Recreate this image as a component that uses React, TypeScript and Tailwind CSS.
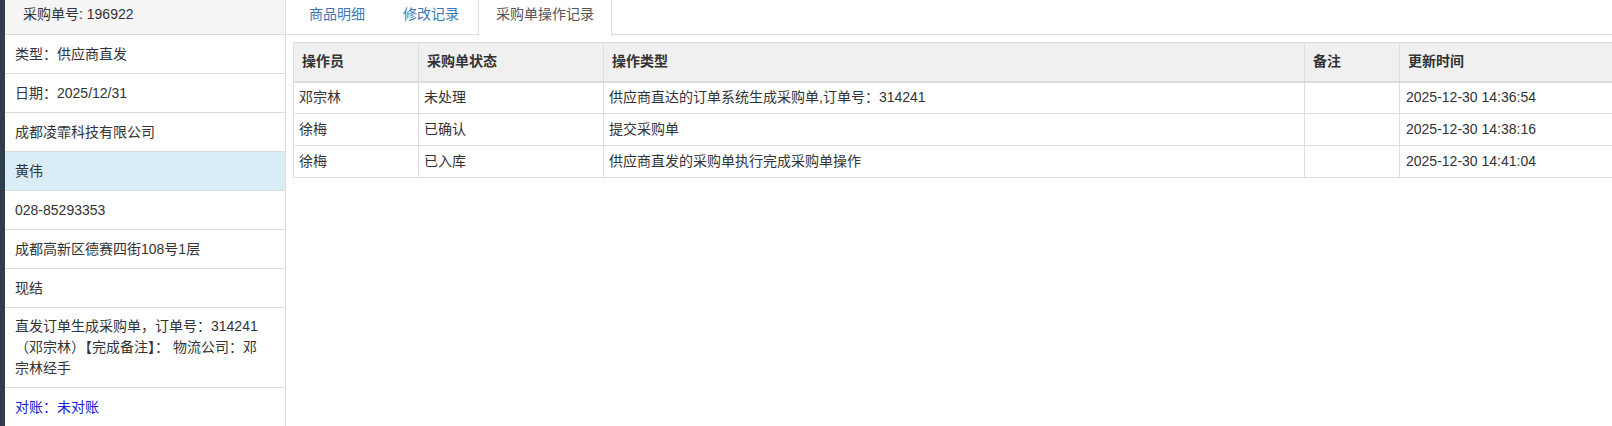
const FONT = "font-['Liberation_Sans','Noto_Sans_CJK_SC',sans-serif]";

const INFO_ROWS = [
  { text: "类型：供应商直发" },
  { text: "日期：2025/12/31" },
  { text: "成都凌霏科技有限公司" },
  { text: "黄伟", active: true },
  { text: "028-85293353" },
  { text: "成都高新区德赛四街108号1层" },
  { text: "现结" },
];

const TABS = [
  { label: "商品明细" },
  { label: "修改记录" },
  { label: "采购单操作记录", active: true },
];

const LOGS = [
  { user: "邓宗林", status: "未处理", action: "供应商直达的订单系统生成采购单,订单号：314241", note: "", time: "2025-12-30 14:36:54" },
  { user: "徐梅", status: "已确认", action: "提交采购单", note: "", time: "2025-12-30 14:38:16" },
  { user: "徐梅", status: "已入库", action: "供应商直发的采购单执行完成采购单操作", note: "", time: "2025-12-30 14:41:04" },
];

function InfoPanel() {
  return (
    <div className="w-[281px] shrink-0 border-r border-[#ddd] -mt-[6px] flex flex-col">
      <div className="h-[41px] shrink-0 bg-[#f5f5f5] border-b border-[#ddd] pl-[18px] flex items-center">
        采购单号: 196922
      </div>
      {INFO_ROWS.map((row, i) => (
        <div
          key={i}
          className={`h-[39px] shrink-0 border-b border-[#ddd] px-[10px] flex items-center ${row.active ? "bg-[#d9edf7]" : ""}`}
        >
          {row.text}
        </div>
      ))}
      {/* 备注 wraps over three lines */}
      <div className="shrink-0 border-b border-[#ddd] px-[10px] py-[8px] leading-[21px]">
        直发订单生成采购单，订单号：314241
        <br />
        （邓宗林）【完成备注】： 物流公司：邓
        <br />
        宗林经手
      </div>
      <div className="h-[38px] shrink-0 px-[10px] flex items-center text-[#1a1ad0]">对账：未对账</div>
    </div>
  );
}

function Tabs() {
  return (
    <div className="ml-[1px] h-[41px] border-b border-[#ddd] pl-[3px] flex">
      {TABS.map(tab => (
        <div
          key={tab.label}
          className={`flex items-center ${
            tab.active
              ? "h-[42px] px-[17px] pb-[1px] -mb-[1px] bg-white border border-[#ddd] border-b-transparent text-[#555]"
              : "h-[41px] px-[19px] text-[#3b78b4]"
          }`}
        >
          {tab.label}
        </div>
      ))}
    </div>
  );
}

function LogTable() {
  return (
    <table className="ml-[7px] mt-[7px] w-[1346px] table-fixed border-collapse">
      <colgroup>
        <col className="w-[125px]" />
        <col className="w-[185px]" />
        <col className="w-[701px]" />
        <col className="w-[95px]" />
        <col className="w-[240px]" />
      </colgroup>
      <thead>
        <tr className="bg-[#f0f0f0]">
          {["操作员", "采购单状态", "操作类型", "备注", "更新时间"].map(h => (
            <th key={h} className="h-[39px] border border-[#ddd] border-b-2 px-[8px] text-left font-bold">
              {h}
            </th>
          ))}
        </tr>
      </thead>
      <tbody>
        {LOGS.map((log, i) => (
          <tr key={i}>
            <td className="h-[32px] border border-[#ddd] px-[5px]">{log.user}</td>
            <td className="h-[32px] border border-[#ddd] px-[5px]">{log.status}</td>
            <td className="h-[32px] border border-[#ddd] px-[5px]">{log.action}</td>
            <td className="h-[32px] border border-[#ddd] px-[5px]">{log.note}</td>
            <td className="h-[32px] border border-[#ddd] px-[6px]">{log.time}</td>
          </tr>
        ))}
      </tbody>
    </table>
  );
}

export default function App() {
  return (
    <div className={`w-[1612px] h-[426px] overflow-hidden bg-white flex text-[14px] text-[#333] ${FONT}`}>
      <div className="w-[5px] shrink-0 bg-[#303d4a]" />
      <InfoPanel />
      <div className="flex-1 min-w-0 -mt-[6px] overflow-hidden">
        <Tabs />
        <LogTable />
      </div>
    </div>
  );
}
